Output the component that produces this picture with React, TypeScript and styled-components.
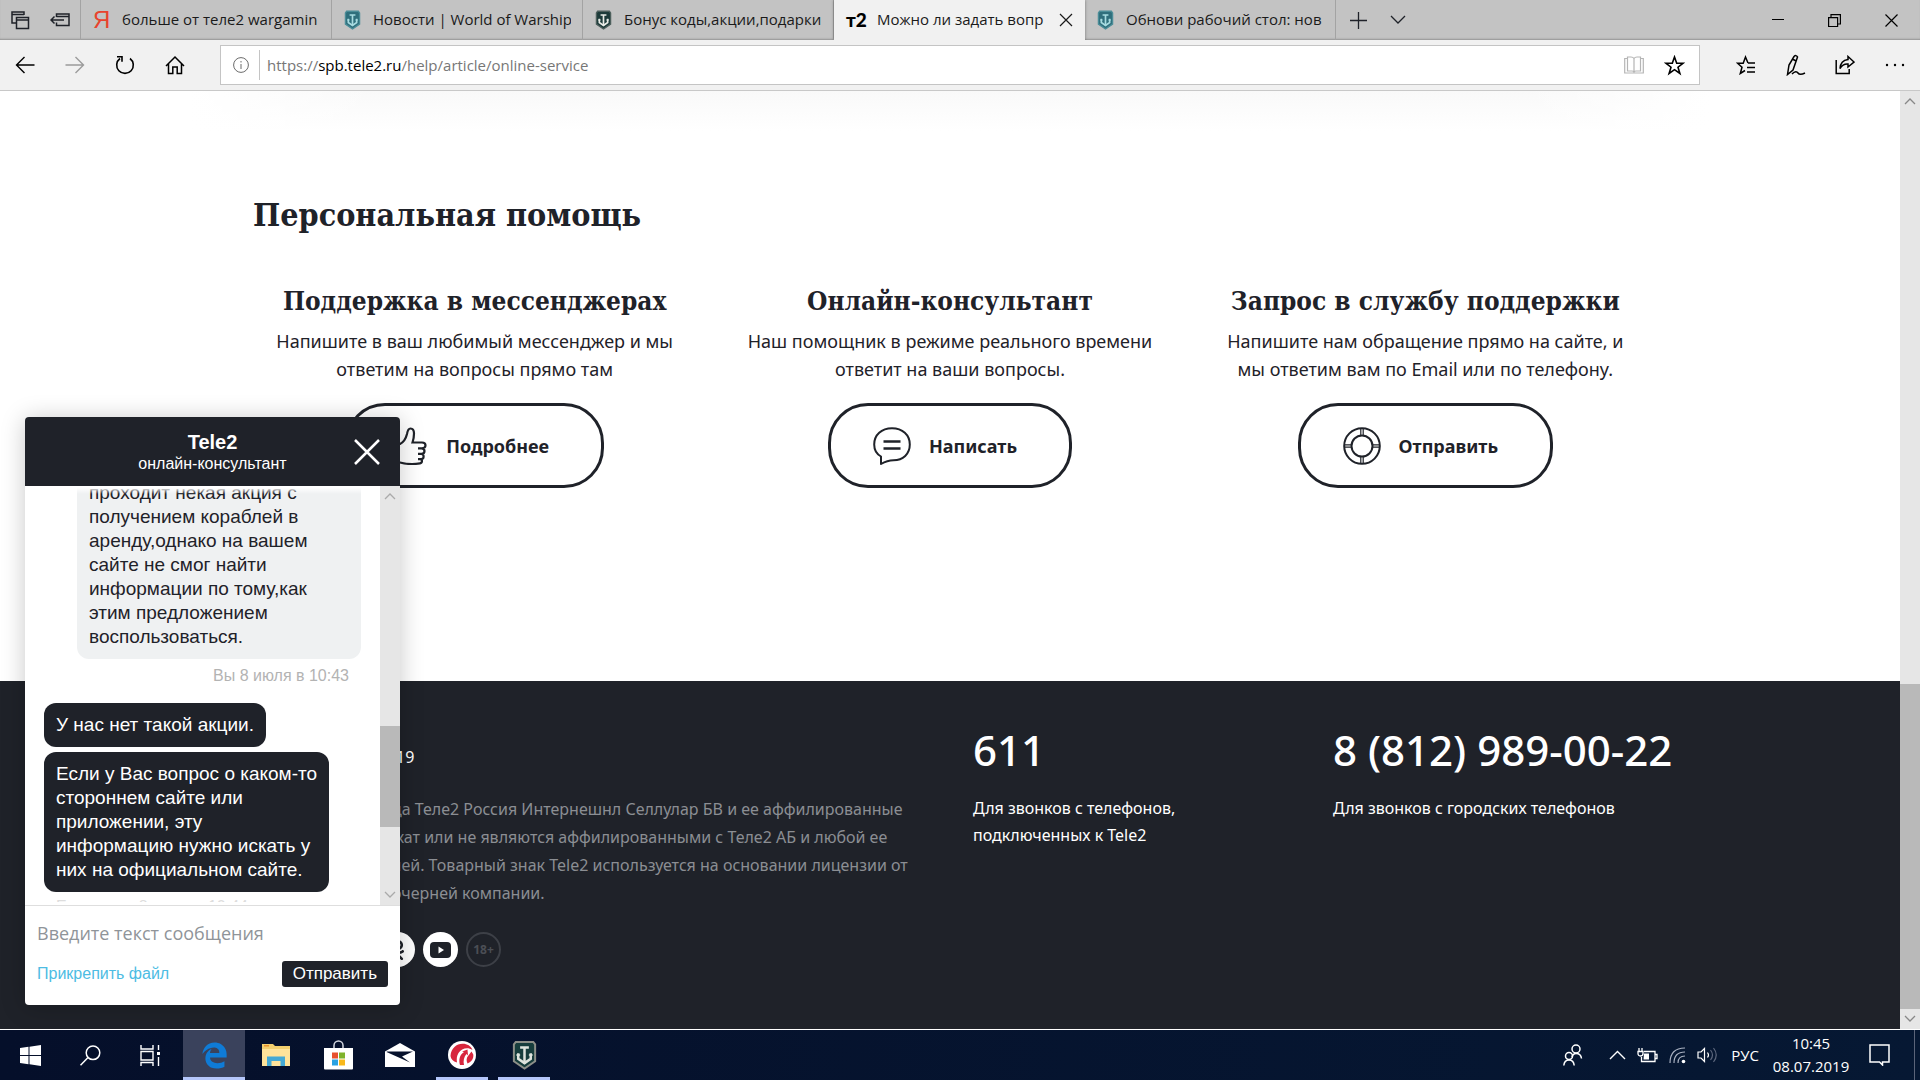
import React from "react";
import styled, { createGlobalStyle, css } from "styled-components";
import { FaEdgeLegacy, FaOdnoklassniki } from "react-icons/fa";

const ui = `"Open Sans", "Noto Sans", sans-serif`;
const site = `"Noto Sans", "Open Sans", sans-serif`;
const slab = `"DejaVu Serif Condensed", "DejaVu Serif", serif`;
const chatFont = `"Liberation Sans", Arial, sans-serif`;
const ink = "#1f2229";

const GlobalStyle = createGlobalStyle`
  *, *::before, *::after { box-sizing: border-box; }
  body { margin: 0; background: #fff; font-family: ${ui}; color: ${ink}; }
  h1, h2, h3, p { margin: 0; }
  button { border: 0; background: none; padding: 0; font: inherit; color: inherit; cursor: pointer; }
  a { color: inherit; text-decoration: none; }
  svg { display: block; flex: none; }
`;

const Screen = styled.div`
  display: flex;
  flex-direction: column;
  height: 100vh;
  overflow: hidden;
`;

/* ---------- browser chrome ---------- */

const TabStrip = styled.header`
  display: flex;
  height: 40px;
  background: #c3c3c3;
  box-shadow: inset 0 -2px 2px -1px rgba(0, 0, 0, 0.25);
`;

const StripTools = styled.div`
  display: flex;
  align-items: center;
  gap: 20px;
  width: 81px;
  padding-left: 11px;
  border-right: 1px solid #a3a3a3;
`;

const Tab = styled.div<{ $active?: boolean }>`
  display: flex;
  align-items: center;
  gap: 12px;
  flex: 0 1 251px;
  min-width: 0;
  padding: 0 11px 0 12px;
  border-right: 1px solid #a3a3a3;
  font-size: 15px;
  line-height: 38px;
  color: #1a1a1a;
  ${(p) =>
    p.$active &&
    css`
      gap: 11px;
      background: #f1f1f1;
      border-right-color: #f1f1f1;
      box-shadow: 0 0 3px rgba(0, 0, 0, 0.4);
      clip-path: inset(0 -4px 0 -4px);
    `}
`;

const TabTitle = styled.button`
  flex: 1;
  height: 40px;
  padding-bottom: 2px;
  overflow: hidden;
  white-space: nowrap;
  text-align: left;
`;

const IconButton = styled.button<{ $w?: number }>`
  display: flex;
  align-items: center;
  justify-content: center;
  width: ${(p) => (p.$w ? `${p.$w}px` : "auto")};
`;

const WindowButtons = styled.div`
  display: flex;
  margin-left: auto;
`;

const Toolbar = styled.nav`
  display: flex;
  align-items: center;
  height: 51px;
  background: #f1f1f1;
  border-bottom: 1px solid #c8c8c8;
`;

const ToolGroup = styled.div<{ $w: number }>`
  display: flex;
  width: ${(p) => p.$w}px;
`;

const AddressBar = styled.div`
  display: flex;
  align-items: center;
  flex: 1;
  height: 40px;
  padding: 0 14px 0 12px;
  background: #fff;
  border: 1px solid #c4c4c4;
`;

const UrlDivider = styled.span`
  width: 1px;
  height: 30px;
  margin: 0 7px 0 10px;
  background: #c4c4c4;
`;

const Url = styled.a`
  flex: 1;
  font-size: 15px;
  color: #777;
  b {
    font-weight: 400;
    color: #000;
  }
`;

const AddressTools = styled.div`
  display: flex;
  align-items: center;
  gap: 20px;
`;

/* ---------- web page ---------- */

const Viewport = styled.div`
  position: relative;
  display: flex;
  flex: 1;
  min-height: 0;
  border-bottom: 1px solid #fff;
`;

const Page = styled.div`
  display: flex;
  flex-direction: column;
  flex: 1;
  min-width: 0;
`;

const Help = styled.main`
  flex: 1;
  padding: 96px 237px 0;
  background: linear-gradient(90deg, #fff 10%, transparent 20%, transparent 80%, #fff 90%),
    linear-gradient(#f9f9f9, #fff 40px);
`;

const PageTitle = styled.h2`
  padding-left: 16px;
  font: 700 32px/56px ${slab};
`;

const Cards = styled.div`
  display: grid;
  grid-template-columns: repeat(3, 1fr);
  padding-top: 40px;
`;

const Card = styled.section`
  display: flex;
  flex-direction: column;
  align-items: center;
  text-align: center;
  h3 {
    font: 700 26px/36px ${slab};
    white-space: nowrap;
  }
  p {
    margin: 8px 0 20px;
    font: 400 18px/28px ${site};
    white-space: nowrap;
  }
`;

const PillButton = styled.button`
  display: flex;
  align-items: center;
  gap: 18px;
  height: 85px;
  padding: 0 52px 0 42px;
  border: 3px solid ${ink};
  border-radius: 40px;
  font: 700 18px/28px ${site};
`;

const Footer = styled.footer`
  display: grid;
  grid-template-columns: 593fr 360fr 567fr;
  height: 348px;
  padding: 40px 0 0 380px;
  background: ${ink};
  color: #fff;
  font: 400 16px/27px ${site};
`;

const Legal = styled.div`
  line-height: 28px;
  white-space: nowrap;
`;

const Copyright = styled.p`
  padding: 22px 0 24px 16px;
`;

const LegalText = styled.p`
  padding-left: 12px;
  color: #8b8e93;
`;

const Socials = styled.div`
  display: flex;
  gap: 8px;
  padding-top: 25px;
`;

const Social = styled.a<{ $outline?: boolean }>`
  display: flex;
  align-items: center;
  justify-content: center;
  width: 35px;
  height: 35px;
  border-radius: 50%;
  background: ${(p) => (p.$outline ? "transparent" : "#fff")};
  border: ${(p) => (p.$outline ? "2px solid #3d4047" : "0")};
  color: ${(p) => (p.$outline ? "#4b4e55" : ink)};
  font: 700 12px/16px ${site};
`;

const Phone = styled.div`
  a {
    display: block;
    font: 500 42px/58px ${site};
    margin-bottom: 16px;
    white-space: nowrap;
  }
`;

const ScrollBar = styled.div<{ $light?: boolean }>`
  display: flex;
  flex-direction: column;
  width: 20px;
  flex: none;
  background: #e6e6e6;
  color: ${(p) => (p.$light ? "#aaa" : "#888")};
`;

const ScrollEnd = styled.button`
  display: flex;
  align-items: center;
  justify-content: center;
  height: 20px;
`;

const ScrollGap = styled.span<{ $grow: number }>`
  flex: ${(p) => p.$grow} 0 0;
`;

const ScrollThumb = styled.span<{ $grow: number }>`
  flex: ${(p) => p.$grow} 0 0;
  background: #b9b9b9;
`;

/* ---------- chat ---------- */

const Chat = styled.aside`
  position: absolute;
  left: 25px;
  bottom: 24px;
  display: flex;
  flex-direction: column;
  width: 375px;
  border-radius: 4px;
  background: #fff;
  box-shadow: 0 2px 24px rgba(0, 0, 0, 0.22);
  font-family: ${chatFont};
`;

const ChatHeader = styled.div`
  display: grid;
  grid-template-columns: 66px 1fr 66px;
  align-items: center;
  height: 69px;
  border-radius: 4px 4px 0 0;
  background: ${ink};
  color: #fff;
  text-align: center;
  font-size: 16px;
  line-height: 20px;
  h3 {
    font-size: 20px;
    line-height: 24px;
  }
`;

const ChatBody = styled.div`
  position: relative;
  display: flex;
  height: 420px;
  border-bottom: 1px solid #dedede;
`;

const Messages = styled.div`
  position: relative;
  display: flex;
  flex-direction: column;
  justify-content: flex-end;
  flex: 1;
  margin-bottom: 3px;
  padding: 0 19px;
  overflow: hidden;
  &::before,
  &::after {
    content: "";
    position: absolute;
    left: 0;
    right: 0;
    height: 8px;
  }
  &::before {
    top: 0;
    background: linear-gradient(#fff 20%, rgba(255, 255, 255, 0));
  }
  &::after {
    bottom: 0;
    background: rgba(255, 255, 255, 0.55);
  }
`;

const Bubble = styled.p<{ $own?: boolean }>`
  align-self: ${(p) => (p.$own ? "flex-end" : "flex-start")};
  width: ${(p) => (p.$own ? "284px" : "auto")};
  flex: none;
  margin-bottom: 5px;
  padding: 10px 12px;
  border-radius: 12px;
  background: ${(p) => (p.$own ? "#eff1f2" : ink)};
  color: ${(p) => (p.$own ? ink : "#fff")};
  font-size: 19px;
  line-height: 24px;
  white-space: nowrap;
`;

const Stamp = styled.p<{ $own?: boolean }>`
  align-self: ${(p) => (p.$own ? "flex-end" : "flex-start")};
  flex: none;
  padding: 0 12px;
  margin-top: ${(p) => (p.$own ? "2px" : "0")};
  margin-bottom: ${(p) => (p.$own ? "17px" : "-15px")};
  color: #b3b3b3;
  font-size: 16px;
  line-height: 20px;
`;

const Composer = styled.form`
  display: grid;
  grid-template-columns: 1fr auto;
  align-items: center;
  row-gap: 14px;
  height: 99px;
  padding: 14px 12px 18px 12px;
  font-size: 16px;
  input {
    grid-column: 1 / -1;
    height: 26px;
    padding: 0;
    border: 0;
    outline: 0;
    font: 400 18px/26px ${ui};
    &::placeholder {
      color: #8f9499;
      opacity: 1;
    }
  }
  a {
    color: #4dbce3;
  }
`;

const Send = styled.button`
  height: 26px;
  padding: 0 11px;
  border-radius: 3px;
  background: ${ink};
  color: #fff;
  font: 400 17px/26px ${chatFont};
`;

/* ---------- taskbar ---------- */

const Taskbar = styled.footer`
  display: flex;
  height: 50px;
  background: linear-gradient(90deg, #050f2a, #061833);
  color: #fff;
`;

const SystemButtons = styled.div`
  display: flex;
  margin-right: 3px;
  > button {
    width: 60px;
  }
`;

const TaskButton = styled.button<{ $running?: boolean; $active?: boolean }>`
  display: flex;
  align-items: center;
  justify-content: center;
  width: 62px;
  background: ${(p) => (p.$active ? "#3a425c" : "transparent")};
  ${(p) =>
    p.$running &&
    css`
      background-image: linear-gradient(#b4c6fa, #b4c6fa);
      background-repeat: no-repeat;
      background-position: bottom;
      background-size: ${p.$active ? "62px" : "52px"} 3px;
    `}
`;

const Tray = styled.div`
  display: flex;
  align-items: center;
  margin-left: auto;
  font-size: 15px;
`;

const TrayIcons = styled.div`
  display: flex;
  align-items: center;
  gap: 11px;
  padding-right: 8px;
  > button:first-child {
    padding-right: 15px;
  }
`;

const Clock = styled.time`
  width: 92px;
  line-height: 23px;
  text-align: center;
`;

const DesktopEdge = styled.span`
  width: 6px;
  height: 50px;
  margin-left: 13px;
  border-left: 1px solid #5b6479;
`;

/* ---------- drawings ---------- */

type IconProps = {
  w: number;
  h?: number;
  box?: string;
  sw?: number;
  color?: string;
  children: React.ReactNode;
};

const Icon = ({ w, h = w, box, sw = 1, color = "currentColor", children }: IconProps) => (
  <svg
    width={w}
    height={h}
    viewBox={box ?? `0 0 ${w} ${h}`}
    fill="none"
    stroke={color}
    strokeWidth={sw}
    aria-hidden="true"
  >
    {children}
  </svg>
);

const Shield = ({ size, fill, rim, mark }: { size: number; fill: string; rim: string; mark: string }) => (
  <Icon w={size} h={Math.round(size * 1.2)} box="0 0 20 24" color={rim} sw={1.6}>
    <path d="M3 1.500h14l1.500 2v13.500L10 22.800 1.500 17V3.500z" fill={fill} />
    <g stroke={mark} strokeWidth="2">
      <path d="M10 5v14M6.500 6h7" />
      <path d="M5 10.500v4.500l5 3.500 5-3.500v-4.500" />
      <path d="M3.500 12h3M13.500 12h3" strokeWidth="1.200" />
    </g>
  </Icon>
);

const TealShield = () => <Shield size={17} fill="#2f6f7c" rim="#4b8d98" mark="#a7dbe0" />;
const DarkShield = () => <Shield size={17} fill="#1d3b3a" rim="#4d5f5c" mark="#e8ebe6" />;

const Chevron = ({ up }: { up?: boolean }) => (
  <Icon w={12} h={8} sw={1.3}>
    <path d={up ? "M1 7l5-5 5 5" : "M1 1l5 5 5-5"} />
  </Icon>
);

const Thumb = () => (
  <Icon w={38} sw={2.2} color={ink}>
    <path d="M2 17h8c4-2 6-6 7-10 .500-3 1-5.500 3.500-5.500s3.500 2 3.500 5c0 3-.500 6-1.500 9h9.500c2 0 3.500 1 3.500 2.800 0 2-1.500 3-3.500 3h-4 3.500c1.800 0 3 1.200 3 2.800 0 1.700-1.200 2.800-3 2.800h-3.500 3c1.500 0 2.600 1 2.600 2.500s-1.100 2.700-2.600 2.700h-3 2c1.200 0 2 .800 2 2s-.900 2-2 2.200C24 37.500 16 37 10 35.500H2z" />
  </Icon>
);

const Speech = () => (
  <Icon w={38} sw={2} color={ink}>
    <path
      d="M8 37v-7.500C3.500 27 1.200 22.500 1.200 17.500 1.200 8 8.500 1.300 19 1.300S36.800 8 36.800 17.500 30 33.200 20.500 33.200c-5 0-7 .500-12.500 3.800z"
      strokeLinejoin="round"
    />
    <path d="M10.500 14.500h17M10.500 21.500h17" strokeWidth="2.400" />
  </Icon>
);

const Lifebuoy = () => (
  <Icon w={38} sw={2} color={ink}>
    <circle cx="19" cy="19" r="17.800" />
    <circle cx="19" cy="19" r="10.500" />
    <path
      d="M17.800 1v8M20.200 1v8M17.800 29v8M20.200 29v8M1 17.800h8M1 20.200h8M29 17.800h8M29 20.200h8"
      strokeWidth="1.200"
    />
  </Icon>
);

const legal = [
  "да Теле2 Россия Интернешнл Селлулар БВ и ее аффилированные",
  "жат или не являются аффилированными с Теле2 АБ и любой ее",
  "лей. Товарный знак Tele2 используется на основании лицензии от",
  "очерней компании.",
];

const question = [
  "проходит некая акция с",
  "получением кораблей в",
  "аренду,однако на вашем",
  "сайте не смог найти",
  "информации по тому,как",
  "этим предложением",
  "воспользоваться.",
];

const answer = [
  "Если у Вас вопрос о каком-то",
  "стороннем сайте или",
  "приложении, эту",
  "информацию нужно искать у",
  "них на официальном сайте.",
];

const helpCards = [
  {
    title: "Поддержка в мессенджерах",
    lines: ["Напишите в ваш любимый мессенджер и мы", "ответим на вопросы прямо там"],
    action: "Подробнее",
    icon: <Thumb />,
  },
  {
    title: "Онлайн-консультант",
    lines: ["Наш помощник в режиме реального времени", "ответит на ваши вопросы."],
    action: "Написать",
    icon: <Speech />,
  },
  {
    title: "Запрос в службу поддержки",
    lines: ["Напишите нам обращение прямо на сайте, и", "мы ответим вам по Email или по телефону."],
    action: "Отправить",
    icon: <Lifebuoy />,
  },
];

const Lines = ({ items }: { items: string[] }) => (
  <>
    {items.map((line, i) => (
      <React.Fragment key={line}>
        {i > 0 && <br />}
        {line}
      </React.Fragment>
    ))}
  </>
);

const YandexMark = styled.span`
  width: 17px;
  color: #e8432e;
  font: 400 24px/28px ${chatFont};
  text-align: center;
`;

const TeleMark = styled.span`
  width: 20px;
  color: #000;
  font: 900 19px/24px Lato, ${site};
  text-align: center;
  white-space: nowrap;
`;

export default function App() {
  return (
    <Screen>
      <GlobalStyle />
      <TabStrip>
        <StripTools>
          <IconButton aria-label="Отложенные вкладки">
            <Icon w={19} h={19} sw={1.5}>
              <path d="M5 12H1V1h12v3M1 3.500h12" />
              <path d="M5.500 6.500h12v11h-12zM5.500 9h12" />
            </Icon>
          </IconButton>
          <IconButton aria-label="Отложить вкладки">
            <Icon w={20} h={16} sw={1.5}>
              <path d="M6.500 5V2h12.500v11.500H6.500v-3M6.500 4.500H19M14 8H1M4.500 4.500L1 8l3.500 3.500" />
            </Icon>
          </IconButton>
        </StripTools>
        <Tab>
          <YandexMark>Я</YandexMark>
          <TabTitle>больше от теле2 wargamin</TabTitle>
        </Tab>
        <Tab>
          <TealShield />
          <TabTitle>Новости | World of Warship</TabTitle>
        </Tab>
        <Tab>
          <DarkShield />
          <TabTitle>Бонус коды,акции,подарки</TabTitle>
        </Tab>
        <Tab $active>
          <TeleMark>т2</TeleMark>
          <TabTitle>Можно ли задать вопр</TabTitle>
          <IconButton aria-label="Закрыть вкладку">
            <Icon w={14} sw={1.2}>
              <path d="M1 1l12 12M13 1L1 13" />
            </Icon>
          </IconButton>
        </Tab>
        <Tab>
          <TealShield />
          <TabTitle>Обнови рабочий стол: нов</TabTitle>
        </Tab>
        <IconButton $w={44} aria-label="Новая вкладка">
          <Icon w={17} sw={1.3}>
            <path d="M8.500 0v17M0 8.500h17" />
          </Icon>
        </IconButton>
        <IconButton $w={36} aria-label="Список вкладок">
          <Icon w={16} h={10} sw={1.3}>
            <path d="M1 1l7 7 7-7" />
          </Icon>
        </IconButton>
        <WindowButtons>
          <IconButton $w={57} aria-label="Свернуть">
            <Icon w={12} color="#000">
              <path d="M0 5.500h12" />
            </Icon>
          </IconButton>
          <IconButton $w={57} aria-label="Восстановить">
            <Icon w={13} color="#000" sw={1.2}>
              <path d="M.600 3.600h9v9h-9zM3 3.500V.600h9.400v9.400H10" />
            </Icon>
          </IconButton>
          <IconButton $w={57} aria-label="Закрыть">
            <Icon w={13} color="#000" sw={1.2}>
              <path d="M.500.500l12 12M12.500.500l-12 12" />
            </Icon>
          </IconButton>
        </WindowButtons>
      </TabStrip>

      <Toolbar>
        <ToolGroup $w={220}>
          <IconButton $w={50} aria-label="Назад">
            <Icon w={20} h={18} sw={1.4} color="#000">
              <path d="M19.500 9H1.500M9.500 1l-8 8 8 8" />
            </Icon>
          </IconButton>
          <IconButton $w={50} aria-label="Вперёд">
            <Icon w={20} h={18} sw={1.4} color="#9b9b9b">
              <path d="M.500 9h18M10.500 1l8 8-8 8" />
            </Icon>
          </IconButton>
          <IconButton $w={50} aria-label="Обновить">
            <Icon w={20} h={20} sw={1.6} color="#000">
              <path d="M5 3.500a8.300 8.300 0 1 0 10 0M2 1.800h5v5" />
            </Icon>
          </IconButton>
          <IconButton $w={50} aria-label="Домой">
            <Icon w={20} h={20} sw={1.5} color="#000">
              <path d="M1 11l9-9 9 9M3.500 9v9.500h4.300V12h4.400v6.500h4.300V9" />
            </Icon>
          </IconButton>
        </ToolGroup>
        <AddressBar>
          <Icon w={16} color="#6b6b6b">
            <circle cx="8" cy="8" r="7.400" />
            <path d="M8 7v5M8 4v1.500" />
          </Icon>
          <UrlDivider />
          <Url href="#">
            https://<b>spb.tele2.ru</b>/help/article/online-service
          </Url>
          <AddressTools>
            <IconButton aria-label="Режим чтения">
              <Icon w={20} h={18} color="#b5b5b5" sw={1.2}>
                <path d="M10 2.500V16M10 2.500Q9 1 7 1H3.500v14H8q1.500 0 2 1 .500-1 2-1h4.500V1H13q-2 0-3 1.500M3 2.500H.700V17h18.600V2.500H17" />
              </Icon>
            </IconButton>
            <IconButton aria-label="В избранное">
              <Icon w={21} sw={1.6} color="#000">
                <path d="M10.500 2l2.200 6.200h6.500l-5.200 4 1.900 6.300-5.400-3.800-5.400 3.800L7 12.200l-5.200-4h6.500z" />
              </Icon>
            </IconButton>
          </AddressTools>
        </AddressBar>
        <ToolGroup $w={220}>
          <IconButton $w={91} aria-label="Избранное">
            <Icon w={20} sw={1.5} color="#000">
              <path d="M12 8l-2.500-6-2.300 6.200H1.500l4.500 4-1.700 6.300 4.700-3M12 8h7M11 12.500h8M11 17h8" />
            </Icon>
          </IconButton>
          <IconButton $w={10} aria-label="Заметки">
            <Icon w={20} h={22} sw={1.5} color="#000">
              <path d="M1.500 20.500L3 11 8 2.500q2-2 3.500.500L7 16z M1.500 20.500L7 16M6.500 5l3.500 2M6 20c3-3 5-2.500 6-1s3 2 7 0" />
            </Icon>
          </IconButton>
          <IconButton $w={88} aria-label="Поделиться">
            <Icon w={20} sw={1.5} color="#000">
              <path d="M1.200 5v13.500h13V14M13 1.500l6 5.500-6 5V9q-5-.500-8 4.500Q5.500 5.500 13 4.500z" />
            </Icon>
          </IconButton>
          <IconButton $w={12} aria-label="Ещё">
            <Icon w={20} h={4} color="none">
              <g fill="#000">
                <circle cx="2" cy="2" r="1.200" />
                <circle cx="10" cy="2" r="1.200" />
                <circle cx="18" cy="2" r="1.200" />
              </g>
            </Icon>
          </IconButton>
        </ToolGroup>
      </Toolbar>

      <Viewport>
        <Page>
          <Help>
            <PageTitle>Персональная помощь</PageTitle>
            <Cards>
              {helpCards.map((c) => (
                <Card key={c.title}>
                  <h3>{c.title}</h3>
                  <p>
                    <Lines items={c.lines} />
                  </p>
                  <PillButton>
                    {c.icon}
                    {c.action}
                  </PillButton>
                </Card>
              ))}
            </Cards>
          </Help>
          <Footer>
            <Legal>
              <Copyright>19</Copyright>
              <LegalText>
                <Lines items={legal} />
              </LegalText>
              <Socials>
                <Social href="#" aria-label="Одноклассники">
                  <FaOdnoklassniki size={20} />
                </Social>
                <Social href="#" aria-label="YouTube">
                  <Icon w={21} h={16} color="none">
                    <rect width="21" height="16" rx="4" fill={ink} />
                    <path d="M8.500 4.500v7l5.500-3.500z" fill="#fff" />
                  </Icon>
                </Social>
                <Social href="#" $outline>
                  18+
                </Social>
              </Socials>
            </Legal>
            <Phone>
              <a href="tel:611">611</a>
              <p>
                Для звонков с телефонов,
                <br />
                подключенных к Tele2
              </p>
            </Phone>
            <Phone>
              <a href="tel:88129890022">8 (812) 989-00-22</a>
              <p>Для звонков с городских телефонов</p>
            </Phone>
          </Footer>
        </Page>
        <ScrollBar>
          <ScrollEnd aria-label="Вверх">
            <Chevron up />
          </ScrollEnd>
          <ScrollGap $grow={573} />
          <ScrollThumb $grow={325} />
          <ScrollEnd aria-label="Вниз">
            <Chevron />
          </ScrollEnd>
        </ScrollBar>

        <Chat>
          <ChatHeader>
            <span />
            <div>
              <h3>Tele2</h3>
              <p>онлайн-консультант</p>
            </div>
            <IconButton aria-label="Закрыть чат">
              <Icon w={26} sw={2.5}>
                <path d="M1 1l24 24M25 1L1 25" />
              </Icon>
            </IconButton>
          </ChatHeader>
          <ChatBody>
            <Messages>
              <Bubble $own>
                <Lines items={question} />
              </Bubble>
              <Stamp $own>Вы 8 июля в 10:43</Stamp>
              <Bubble>У нас нет такой акции.</Bubble>
              <Bubble>
                <Lines items={answer} />
              </Bubble>
              <Stamp>Екатерина 8 июля в 10:44</Stamp>
            </Messages>
            <ScrollBar $light>
              <ScrollEnd aria-label="Вверх">
                <Chevron up />
              </ScrollEnd>
              <ScrollGap $grow={220} />
              <ScrollThumb $grow={101} />
              <ScrollGap $grow={58} />
              <ScrollEnd aria-label="Вниз">
                <Chevron />
              </ScrollEnd>
            </ScrollBar>
          </ChatBody>
          <Composer onSubmit={(e) => e.preventDefault()}>
            <input aria-label="Сообщение" placeholder="Введите текст сообщения" />
            <a href="#">Прикрепить файл</a>
            <Send type="submit">Отправить</Send>
          </Composer>
        </Chat>
      </Viewport>

      <Taskbar>
        <SystemButtons>
          <TaskButton aria-label="Пуск">
            <Icon w={21} color="none">
              <path
                fill="#fff"
                d="M0 3l8.500-1.200V10H0zM9.500 1.700L21 0v10H9.500zM0 11h8.500v8.200L0 18zM9.500 11H21v10l-11.500-1.700z"
              />
            </Icon>
          </TaskButton>
          <TaskButton aria-label="Поиск">
            <Icon w={21} sw={1.5}>
              <circle cx="13" cy="7.800" r="6.800" />
              <path d="M8 12.600L.500 20.300" />
            </Icon>
          </TaskButton>
          <TaskButton aria-label="Представление задач">
            <Icon w={21} sw={1.4}>
              <path d="M1 0v4h12V0M1 21v-3.500h12V21M1 6.500h12v8.500H1zM18.500 0v5M18.500 12v9" />
              <path d="M17 7h3v3h-3z" fill="#fff" stroke="none" />
            </Icon>
          </TaskButton>
        </SystemButtons>
        <TaskButton $active $running aria-label="Microsoft Edge">
          <FaEdgeLegacy size={27} color="#0f7bd6" />
        </TaskButton>
        <TaskButton aria-label="Проводник">
          <Icon w={28} h={24} color="none">
            <path d="M0 1h11l2 2h15v20H0z" fill="#f3cf6e" />
            <path d="M0 6h28v17H0z" fill="#ffe39a" />
            <path d="M5 23V13.500h18V23h-4.500v-5h-9v5z" fill="#45a9d4" />
            <path d="M2 2h5v1.500H2z" fill="#e8912f" />
          </Icon>
        </TaskButton>
        <TaskButton aria-label="Microsoft Store">
          <Icon w={29} h={30} color="#d5d8e0" sw={1.5}>
            <path d="M10 9V5.500C10 3 12 1 14.500 1S19 3 19 5.500V9" />
            <path d="M0 8h29v20.500q0 1-1 1H1q-1 0-1-1z" fill="#fff" stroke="none" />
            <g stroke="none">
              <path d="M8 12.500h6v6H8z" fill="#e8502e" />
              <path d="M15 12.500h6v6h-6z" fill="#7fb32b" />
              <path d="M8 19.500h6v6H8z" fill="#2aa2e2" />
              <path d="M15 19.500h6v6h-6z" fill="#f8b81c" />
            </g>
          </Icon>
        </TaskButton>
        <TaskButton aria-label="Почта">
          <Icon w={30} h={24} color="none">
            <path d="M0 8.500L15 0l15 8.500V24H0z" fill="#fff" />
            <path d="M2 8.500h26L17 13.500l8 6L1.500 9z" fill="#06112c" />
          </Icon>
        </TaskButton>
        <TaskButton $running aria-label="Wargaming Game Center">
          <Icon w={28} color="none">
            <circle cx="14" cy="14" r="14" fill="#fff" />
            <path
              d="M2.500 15C3 7 9 2.500 15 2.800c4 0 8 2.200 9.500 6.200-5-3.500-11-1.500-14 3-1.800 3-2 6-1.500 9.500C5 20.500 3 18 2.500 15z"
              fill="#d7263d"
            />
            <path
              d="M12 24c-1.500-5-.500-10 4-13l-2-.500 5.500-2 .500 6-1.500-1.500c-2.500 2.500-3.500 7-2.500 11zM19.500 22.500c-1.500-3-1-5.500.500-7.500l3.500-4.500 1.800 3c.500 4-1.800 7.500-5.800 9z"
              fill="#d7263d"
            />
          </Icon>
        </TaskButton>
        <TaskButton $running aria-label="World of Warships">
          <Shield size={25} fill="#173d3c" rim="#8d8f88" mark="#dfe3dd" />
        </TaskButton>

        <Tray>
          <TrayIcons>
            <IconButton aria-label="Люди">
              <Icon w={20} h={22} sw={1.5}>
                <circle cx="13" cy="5" r="4" />
                <path d="M9 13q1-3.500 4-3.500 5 0 5.500 5" />
                <circle cx="6" cy="12" r="3.500" />
                <path d="M.800 21.500q.500-5.500 5.200-5.500t5.200 5.500" />
              </Icon>
            </IconButton>
            <IconButton aria-label="Скрытые значки">
              <Icon w={17} h={10} sw={1.4}>
                <path d="M1 9l7.500-7.500L16 9" />
              </Icon>
            </IconButton>
            <IconButton aria-label="Батарея">
              <Icon w={21} h={15} sw={1.3}>
                <path d="M7 3.500h11v10H4.500V9M18.500 6.500H20v4h-1.500M1 3.500h5v2Q6 8 3.500 8T1 5.500zM2 0v3M5 0v3" />
                <path d="M7 5.500h5v6H6.500z" fill="#fff" stroke="none" />
              </Icon>
            </IconButton>
            <IconButton aria-label="Сеть">
              <Icon w={17} h={17} sw={1.2}>
                <path d="M1 16Q1 1 16 1M5 16Q5 5 16 5M9 16Q9 9 16 9" stroke="#aab2c2" />
                <circle cx="14.500" cy="14.500" r="1.800" fill="#fff" stroke="none" />
              </Icon>
            </IconButton>
            <IconButton aria-label="Громкость">
              <Icon w={20} h={16} sw={1.2}>
                <path d="M1 5h3l3.500-3.500v13L4 11H1zM10.500 5.500q2 2.500 0 5" />
                <path d="M13.500 3q4 5 0 10M16.500 1q5.500 7 0 14" stroke="#5d677d" />
              </Icon>
            </IconButton>
          </TrayIcons>
          <IconButton $w={40}>РУС</IconButton>
          <Clock dateTime="2019-07-08T10:45">
            10:45
            <br />
            08.07.2019
          </Clock>
          <IconButton $w={44} aria-label="Центр уведомлений">
            <Icon w={21} h={22} sw={1.5}>
              <path d="M1 1h19v17h-6.500v3L10.500 18H1z" />
            </Icon>
          </IconButton>
          <DesktopEdge />
        </Tray>
      </Taskbar>
    </Screen>
  );
}
